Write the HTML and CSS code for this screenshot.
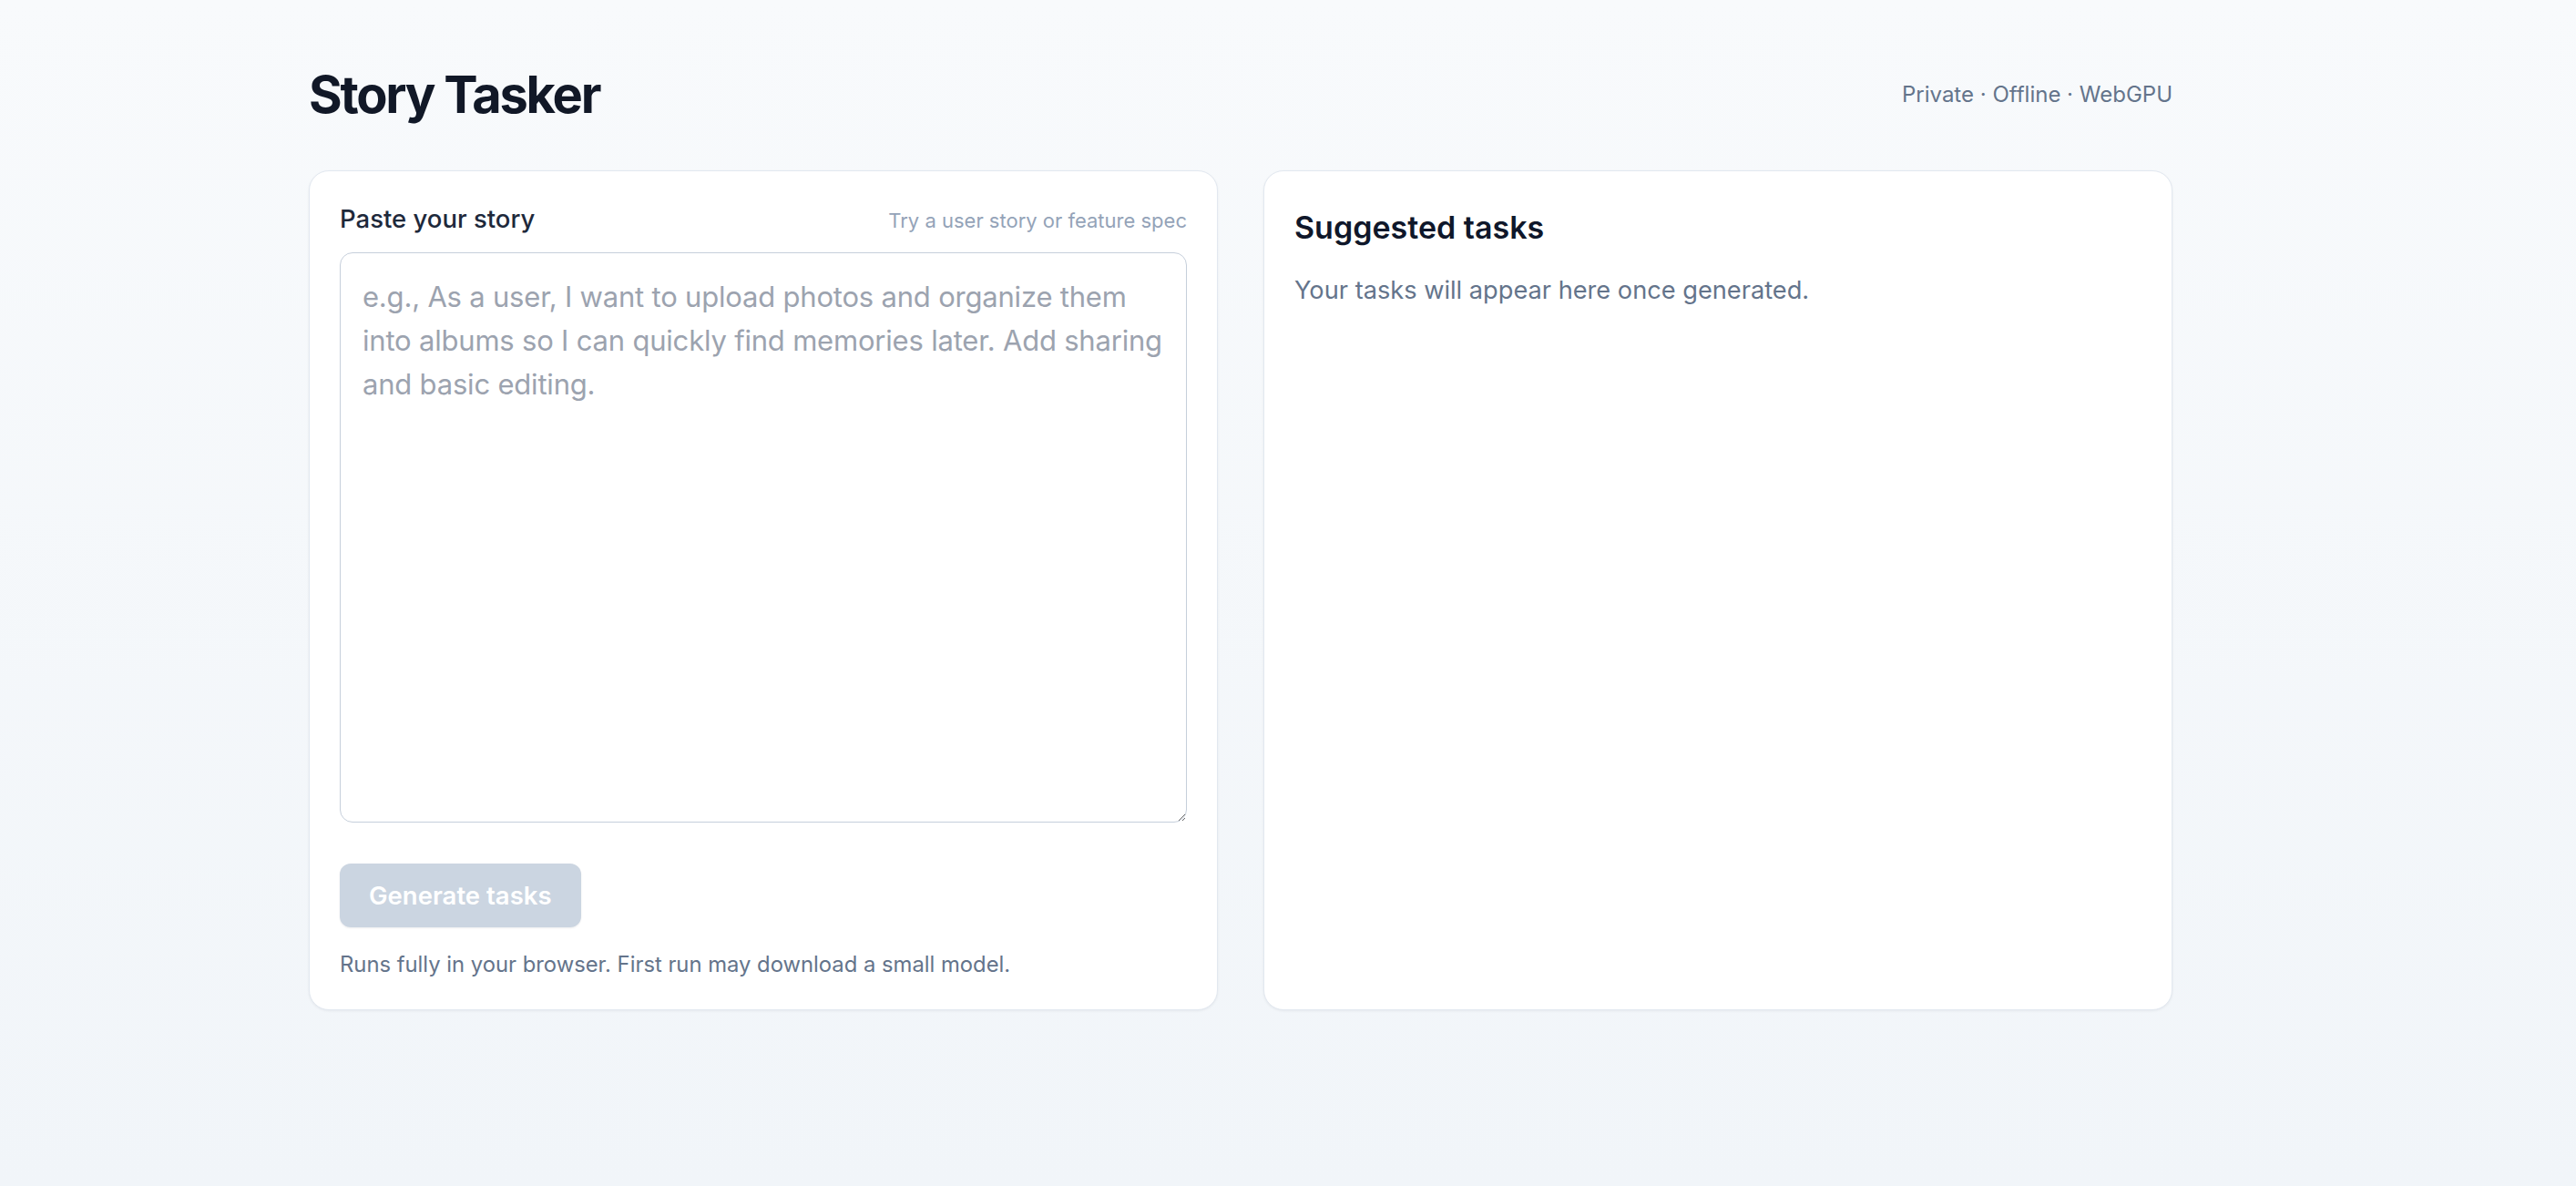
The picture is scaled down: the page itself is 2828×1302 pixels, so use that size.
FILE: index.html
```html
<!DOCTYPE html>
<html lang="en">
<head>
<meta charset="utf-8">
<title>Story Tasker</title>
<link rel="stylesheet" href="styles.css">
</head>
<body>
<div class="page">
  <header class="header">
    <h1 class="title">Story Tasker</h1>
    <div class="tagline">Private · Offline · WebGPU</div>
  </header>
  <main class="grid">
    <section class="card">
      <div class="label-row">
        <label class="label" for="story">Paste your story</label>
        <span class="hint">Try a user story or feature spec</span>
      </div>
      <textarea id="story" class="story" placeholder="e.g., As a user, I want to upload photos and organize them into albums so I can quickly find memories later. Add sharing and basic editing."></textarea>
      <button class="btn" disabled>Generate tasks</button>
      <p class="note">Runs fully in your browser. First run may download a small model.</p>
    </section>
    <section class="card">
      <h2 class="card-title">Suggested tasks</h2>
      <p class="empty">Your tasks will appear here once generated.</p>
    </section>
  </main>
</div>
</body>
</html>
```

FILE: styles.css
```css
* { box-sizing: border-box; }
html, body { margin: 0; padding: 0; }
body {
  min-height: 100vh;
  font-family: Inter, "Noto Sans", "Liberation Sans", sans-serif;
  background: linear-gradient(180deg, #f8fafc 0%, #f1f5f9 100%);
  color: #0f172a;
}
.page {
  width: 2046px;
  margin-left: 339px;
  padding-top: 69px;
}
.header {
  display: flex;
  justify-content: space-between;
  align-items: center;
}
.title {
  margin: 0;
  font-size: 56px;
  line-height: 70px;
  font-weight: 700;
  letter-spacing: -0.04em;
  color: #111827;
}
.tagline {
  font-size: 24px;
  line-height: 36px;
  color: #64748b;
}
.grid {
  margin-top: 48px;
  display: grid;
  grid-template-columns: 998px 998px;
  column-gap: 50px;
  align-items: stretch;
}
.card {
  background: #ffffff;
  border: 1px solid #e2e8f0;
  border-radius: 22px;
  padding: 33px;
  box-shadow: 0 1px 3px rgba(15, 23, 42, 0.06);
}
.label-row {
  display: flex;
  justify-content: space-between;
  align-items: baseline;
  margin-bottom: 17px;
}
.label {
  font-size: 27.5px;
  line-height: 39px;
  font-weight: 500;
  color: #1e293b;
}
.hint {
  font-size: 22px;
  color: #94a3b8;
}
.story {
  display: block;
  width: 100%;
  height: 626px;
  padding: 24px;
  border: 1px solid #c6cfdb;
  border-radius: 14px;
  font-family: inherit;
  font-size: 31px;
  letter-spacing: -0.2px;
  line-height: 48px;
  color: #0f172a;
  background: #ffffff;
  resize: vertical;
  outline: none;
}
.story::placeholder { color: #9ca3af; }
.btn {
  display: block;
  margin-top: 45px;
  padding: 14px 32px;
  border: none;
  border-radius: 12px;
  background: #cbd5e1;
  color: #ffffff;
  font-family: inherit;
  font-size: 27.5px;
  line-height: 42px;
  font-weight: 600;
  box-shadow: 0 1px 2px rgba(15, 23, 42, 0.08);
}
.note {
  margin: 24px 0 0;
  font-size: 23.8px;
  line-height: 33px;
  color: #64748b;
}
.card-title {
  margin: 6px 0 0;
  font-size: 34px;
  line-height: 45px;
  font-weight: 600;
  color: #0f172a;
}
.empty {
  margin: 27px 0 0;
  font-size: 27.2px;
  line-height: 39px;
  color: #64748b;
}
```
